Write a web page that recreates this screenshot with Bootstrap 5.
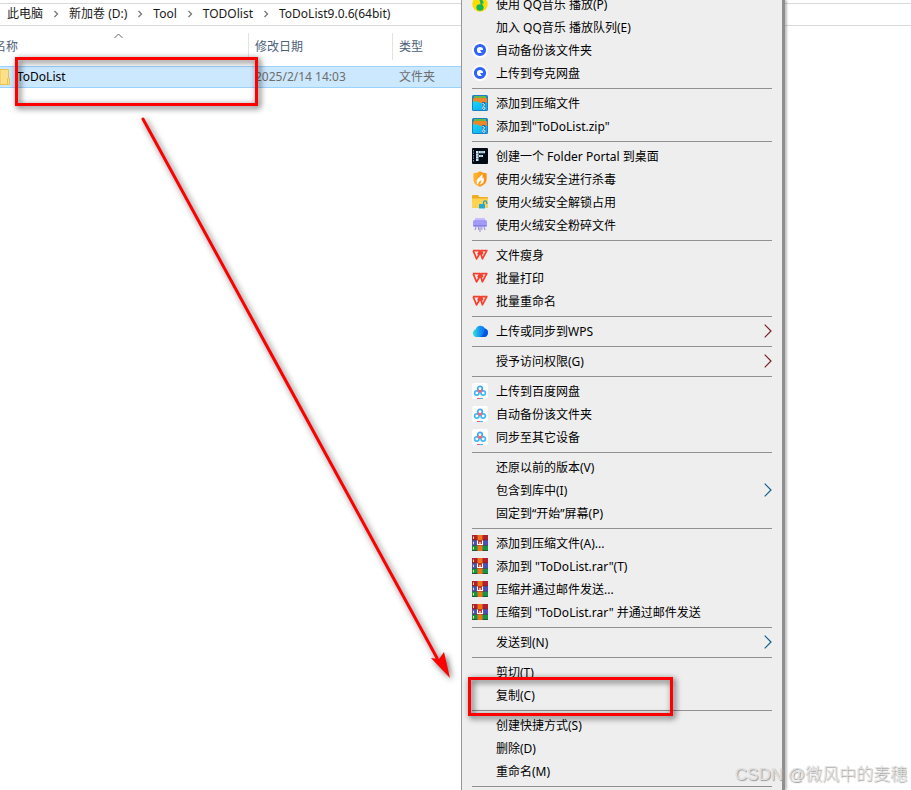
<!DOCTYPE html>
<html lang="zh-CN">
<head>
<meta charset="utf-8">
<meta name="viewport" content="width=device-width, initial-scale=1">
<title>ToDoList9.0.6(64bit)</title>
<link href="https://cdn.jsdelivr.net/npm/bootstrap@5.3.0/dist/css/bootstrap.min.css" rel="stylesheet">
<style>
body { font-family: "Noto Sans", "Noto Sans CJK SC", sans-serif; font-size: 12px; line-height: 16px; color: #000; background: #fff; }
.crumbs { margin-top: 3px; height: 23px; padding: 0 7px 1px; gap: 10px; border-top: 1px solid #d9d9d9; border-bottom: 1px solid #d9d9d9; white-space: nowrap; }
.crumbs a { color: #1a1a1a; }
.files { width: 600px; margin-top: 7px; table-layout: fixed; border-collapse: separate; border-spacing: 0; }
.files th { height: 27px; padding: 0 0 0 6px; font-weight: 400; color: #4c607a; border-right: 1px solid #e3e3e3; position: relative; }
.files th:first-child, .files td:first-child { width: 249px; padding-left: 0; }
.files th:nth-child(2) { width: 144px; }
.files th:last-child { border-right: 0; }
.files .name-head { margin-left: -6px; }
.files .sort-mark { position: absolute; left: 114px; top: 0; }
.files tbody:before { content: ""; display: block; height: 6px; }
.files td { height: 22px; padding: 0 0 0 6px; background: #cce8ff; color: #6d6d6d; border-top: 1px solid #99d1ff; border-bottom: 1px solid #99d1ff; }
.files td:first-child { color: #000; }
.file-name { gap: 7px; }
.ctx { left: 461px; top: 0; width: 324px; height: 100%; background: #eee; border-left: 1px solid #989898; border-right: 3px solid #8f8f8f; box-shadow: 2px 0 2px rgba(0,0,0,.25); padding: 0 10px; z-index: 2; }
.ctx-list { margin-top: -7px; }
.ctx-item { height: 23px; gap: 8px; color: #000; white-space: nowrap; }
.ctx-icon { width: 16px; height: 16px; flex: none; margin-bottom: 1px; }
.ctx-next { margin-bottom: 1px; }
.next-red { color: #7c2029; }
.next-blue { color: #17608f; }
.ctx-line { height: 7px; padding-top: 3px; }
.ctx-line:before { content: ""; display: block; height: 1px; background: #919191; }
.frame-mark { border: 3px solid #f00; filter: drop-shadow(2px 2px 3px rgba(0,0,0,.75)); z-index: 3; pointer-events: none; }
.frame-file { left: 15px; top: 57px; width: 243px; height: 49px; }
.frame-copy { left: 468px; top: 677px; width: 205px; height: 39px; }
.arrow-mark { left: 0; top: 0; z-index: 3; filter: drop-shadow(2px 2px 3px rgba(0,0,0,.6)); pointer-events: none; }
.credit { right: 4px; bottom: 3px; z-index: 4; font-family: "Liberation Sans", "Noto Sans CJK SC", sans-serif; font-size: 17px; line-height: 24px; font-weight: 300; color: #e0e0e0; text-shadow: 1px 1px 1px #999; white-space: nowrap; }
</style>
<script src="https://cdn.jsdelivr.net/npm/bootstrap@5.3.0/dist/js/bootstrap.bundle.min.js"></script>
</head>
<body class="position-relative vh-100 overflow-hidden">
<svg width="0" height="0" class="position-absolute" aria-hidden="true">
  <defs>
    <linearGradient id="gb" x1="0" x2="1"><stop offset="0" stop-color="#35e0d4"/><stop offset=".45" stop-color="#1596f5"/><stop offset="1" stop-color="#0a56e8"/></linearGradient>
    <linearGradient id="gf" x1="0" x2="1"><stop offset="0" stop-color="#ffb52e"/><stop offset="1" stop-color="#ff8b0f"/></linearGradient>
    <linearGradient id="gz" x1="0" x2="1" y2="1"><stop offset="0" stop-color="#18d8f5"/><stop offset="1" stop-color="#10a4f2"/></linearGradient>
  </defs>
  <symbol id="i-qq" viewBox="0 0 16 16"><circle cx="8" cy="8" r="7.7" fill="#ffdc00"/><path d="M7.2 2.2c1 2 4 1.8 3.600 5.200M8 2.500l2 8" stroke="#17b860" stroke-width="1.600" fill="none"/><ellipse cx="8" cy="11.500" rx="3.600" ry="3.200" fill="#12b65b"/></symbol>
  <symbol id="i-quark" viewBox="0 0 16 16"><circle cx="8" cy="8" r="8" fill="#fff"/><circle cx="8" cy="8" r="4.600" fill="#fff" stroke="#2e62f8" stroke-width="3"/><path d="M8 8h3v2.500H9.500z" fill="#2e62f8"/></symbol>
  <symbol id="i-zip" viewBox="0 0 16 16"><rect width="16" height="16" rx="1.500" fill="#1682c5"/><path d="M2 1h12v3H2z" fill="#65b847"/><path d="M1 4q0-1 1-1h12q1 0 1 1v5H1z" fill="#f08525"/><path d="M1 6.500h5l2 1.500h7v7H1z" fill="url(#gz)"/><path d="M10 7h3.500v8H10z" fill="#1b72a6"/><path d="M10.500 8h1.200v1.200h-1.200zM11.800 9.200H13v1.200h-1.200zM10.500 10.400h1.200v1.200h-1.200z" fill="#f2ffff"/><ellipse cx="11.800" cy="13.200" rx="1.200" ry="1.300" fill="none" stroke="#f2ffff" stroke-width=".9"/></symbol>
  <symbol id="i-portal" viewBox="0 0 16 16"><rect width="16" height="16" rx="1" fill="#020a14"/><path d="M4 3h2.500v10H4zM7 3h6v2.200H7zM7 7h4v2H7z" fill="#cce9f5"/><path d="M1.500 2v12" stroke="#6c94a8" stroke-dasharray="1.500 1"/><path d="M4 5.500h3M4 8h3M4 10.500h3M9 3v6M11 3v3" stroke="#38586b" stroke-width=".5"/></symbol>
  <symbol id="i-shield" viewBox="0 0 16 16"><path d="M8 .2c2 1.200 4 1.800 6.600 2V8c0 4-3 6.500-6.600 7.800C4 14.500 1.400 12 1.400 8V2.200C4 2 6 1.400 8 .2z" fill="url(#gf)"/><path d="M10 2.500c.5 2.500-5.500 4.500-5.500 8 0 1.500.6 2.500 1.800 3.300-.4-2.300 1.200-3.300 2.900-4.800.2 1.700-.4 3-1.400 4.800 3.400-1 4.600-3.300 4-5.800-.2-1-.6-1.600-.9-2 0 1-.4 1.500-1 2 .6-1.500 1.100-3.500.1-5.500z" fill="#fff"/></symbol>
  <symbol id="i-unlock" viewBox="0 0 16 16"><path d="M0 2q0-1 1-1h5l1.500 2H15q1 0 1 1v9q0 1-1 1H1q-1 0-1-1z" fill="#edad22"/><path d="M0 4.500h16V13q0 1-1 1H1q-1 0-1-1z" fill="#ffd352"/><rect x="7" y="10" width="6" height="4.500" rx=".6" fill="#22a8d5"/><path d="M11.500 10V8.500a1.600 1.600 0 0 1 3.200 0V10" fill="none" stroke="#1c9acb" stroke-width="1.200"/></symbol>
  <symbol id="i-shred" viewBox="0 0 16 16"><path d="M3 1h10v4H3z" fill="#c6bffb"/><rect x="1" y="3" width="14" height="7" rx="1.500" fill="#a39af5"/><path d="M1.500 8.500h13" stroke="#8980e6"/><path d="M4 10 3 13M6.500 10v3M8 10v5M9.800 10v3M12 10l1 3" stroke="#9a96dc" stroke-width="1.100"/></symbol>
  <symbol id="i-wps" viewBox="0 0 16 16"><path d="M.9 3.600h7.200L5.800 7.500M1.200 3.800l3.400 8 3.800-6.300 2 6.300 4.400-8.200H9.300l1.500 3.800" fill="none" stroke="#f5402f" stroke-width="1.700" stroke-linejoin="round"/></symbol>
  <symbol id="i-cloud" viewBox="0 0 16 16"><path d="M4 14a4 4 0 0 1-.2-7.700A5 5 0 0 1 13 5.500 4.400 4.400 0 0 1 12 14z" fill="url(#gb)"/><path d="M8 14c2-1 4-3 5-8.500A4.400 4.400 0 0 1 12 14z" fill="#0755dc"/></symbol>
  <symbol id="i-baidu" viewBox="0 0 16 16"><rect width="16" height="16" rx="2.500" fill="#fff"/><g fill="none" stroke-width="1.700"><circle cx="8" cy="5.700" r="2.300" stroke="#3fa9f8"/><circle cx="4.800" cy="10" r="2.200" stroke="#43b8fb"/><circle cx="11.200" cy="10" r="2.200" stroke="#43b8fb"/><path d="M5.800 7 8 9l2.200-2" stroke="#f5657c"/></g><path d="M5 15.500h3" stroke="#f5576e"/><path d="M8 15.500h3" stroke="#43b8fb"/></symbol>
  <symbol id="i-rar" viewBox="0 0 16 16"><path d="M0 0h16v5.300H0z" fill="#b01f32"/><path d="M0 5.300h16v5.200H0z" fill="#4b50b5"/><path d="M0 10.500h16V16H0z" fill="#159443"/><path d="M0 5.200h16M0 10.400h16M0 15.700h16" stroke="#242038" stroke-width=".6"/><path d="M5.500 0h5v16h-5z" fill="#ee7415"/><path d="M1.500 1.500V4M1.500 6.700v2.500M1.500 12v2.500" stroke="#f2df80"/><path d="M5 5h6v5.500H5z" fill="#bd3821"/><path d="M5.500 5.500v4h5v-4M8 7v2.500" stroke="#fff" stroke-width="1.100" fill="none"/></symbol>
  <symbol id="i-next" viewBox="0 0 8 14"><path d="m.7.700 6.300 6.300-6.300 6.300" fill="none" stroke="currentColor" stroke-width="1.200"/></symbol>
  <symbol id="i-crumb" viewBox="0 0 6 8"><path d="m1.500 1 3 3-3 3" fill="none" stroke="#777" stroke-width="1.300"/></symbol>
</svg>

<nav class="crumbs d-flex align-items-center" aria-label="路径">
  <a href="#" class="text-decoration-none">此电脑</a><svg width="6" height="8"><use href="#i-crumb"/></svg>
  <a href="#" class="text-decoration-none">新加卷 (D:)</a><svg width="6" height="8"><use href="#i-crumb"/></svg>
  <a href="#" class="text-decoration-none">Tool</a><svg width="6" height="8"><use href="#i-crumb"/></svg>
  <a href="#" class="text-decoration-none">TODOlist</a><svg width="6" height="8"><use href="#i-crumb"/></svg>
  <a href="#" class="text-decoration-none">ToDoList9.0.6(64bit)</a>
</nav>

<table class="files">
  <thead><tr>
    <th><div class="name-head">名称</div><svg class="sort-mark" width="9" height="6" viewBox="0 0 9 6"><path d="m.5 5 4-4 4 4" fill="none" stroke="#666"/></svg></th>
    <th>修改日期</th><th>类型</th>
  </tr></thead>
  <tbody><tr>
    <td><div class="file-name d-flex align-items-center"><svg width="10" height="16" viewBox="0 0 10 16"><path d="M0 .500h8.500V9.500h1v6H0z" fill="#ffe08a" stroke="#e9c14d"/><path d="M7.500 15V9.500" stroke="#e9c14d"/></svg><span>ToDoList</span></div></td>
    <td>2025/2/14 14:03</td><td>文件夹</td>
  </tr></tbody>
</table>

<div class="ctx position-absolute overflow-hidden">
  <div class="ctx-list d-flex flex-column" id="menu"></div>
</div>

<div class="frame-mark frame-file position-absolute"></div>
<div class="frame-mark frame-copy position-absolute"></div>
<svg class="arrow-mark position-absolute" width="470" height="700" viewBox="0 0 470 700"><path d="M143 119 437 658" stroke="#f00" stroke-width="3" stroke-linecap="round"/><path d="m450 678-19-20 8 1 5-7z" fill="#f00"/></svg>
<div class="credit position-absolute">CSDN @微风中的麦穗</div>

<script>
// Each group is separated by a rule; entries are [icon, label, submenu arrow tone]
const groups = [
  [['qq','使用 QQ音乐 播放(P)'],['','加入 QQ音乐 播放队列(E)'],['quark','自动备份该文件夹'],['quark','上传到夸克网盘']],
  [['zip','添加到压缩文件'],['zip','添加到"ToDoList.zip"']],
  [['portal','创建一个 Folder Portal 到桌面'],['shield','使用火绒安全进行杀毒'],['unlock','使用火绒安全解锁占用'],['shred','使用火绒安全粉碎文件']],
  [['wps','文件瘦身'],['wps','批量打印'],['wps','批量重命名']],
  [['cloud','上传或同步到WPS','red']],
  [['','授予访问权限(G)','red']],
  [['baidu','上传到百度网盘'],['baidu','自动备份该文件夹'],['baidu','同步至其它设备']],
  [['','还原以前的版本(V)'],['','包含到库中(I)','blue'],['','固定到“开始”屏幕(P)']],
  [['rar','添加到压缩文件(A)...'],['rar','添加到 "ToDoList.rar"(T)'],['rar','压缩并通过邮件发送...'],['rar','压缩到 "ToDoList.rar" 并通过邮件发送']],
  [['','发送到(N)','blue']],
  [['','剪切(T)'],['','复制(C)']],
  [['','创建快捷方式(S)'],['','删除(D)'],['','重命名(M)']],
  []
];
document.getElementById('menu').innerHTML = groups.map(g => g.map(([icon, label, sub]) =>
  `<button type="button" class="ctx-item d-flex align-items-center border-0 bg-transparent p-0 w-100 text-start"><svg class="ctx-icon">${icon ? `<use href="#i-${icon}"/>` : ''}</svg><span>${label}</span>${sub ? `<svg class="ctx-next next-${sub} ms-auto" width="8" height="14"><use href="#i-next"/></svg>` : ''}</button>`
).join('')).join('<div class="ctx-line"></div>');
</script>
</body>
</html>
